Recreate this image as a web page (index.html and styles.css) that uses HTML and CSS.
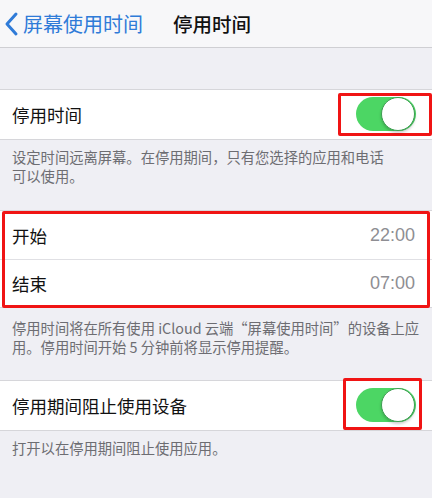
FILE: index.html
```html
<!DOCTYPE html>
<html lang="zh-CN">
<head>
    <meta charset="UTF-8">
    <meta name="viewport" content="width=device-width, initial-scale=1.0">
    <title>停用时间</title>
    <link rel="stylesheet" href="styles.css">
</head>
<body>
    <div class="screen">
        <header class="navbar">
            <a class="back" href="#">
                <svg class="chevron" width="16" height="26" viewBox="0 0 16 26">
                    <polyline points="12,3 3,13 12,23" fill="none" stroke="#2f7bd8" stroke-width="3" stroke-linecap="round" stroke-linejoin="round"/>
                </svg>
                <span>屏幕使用时间</span>
            </a>
            <h1>停用时间</h1>
        </header>

        <section class="group first">
            <div class="row">
                <span class="label">停用时间</span>
                <span class="mark mark-top">
                    <span class="switch on"><span class="knob"></span></span>
                </span>
            </div>
        </section>
        <p class="note note-first">设定时间远离屏幕。在停用期间，只有您选择的应用和电话<br>可以使用。</p>

        <section class="group times">
            <div class="row">
                <span class="label">开始</span>
                <span class="value">22:00</span>
            </div>
            <div class="row">
                <span class="label">结束</span>
                <span class="value">07:00</span>
            </div>
            <span class="mark-box"></span>
        </section>
        <p class="note note-times">停用时间将在所有使用 iCloud 云端“屏幕使用时间”的设备上应<br>用。停用时间开始 5 分钟前将显示停用提醒。</p>

        <section class="group">
            <div class="row">
                <span class="label">停用期间阻止使用设备</span>
                <span class="mark mark-bottom">
                    <span class="switch on"><span class="knob"></span></span>
                </span>
            </div>
        </section>
        <p class="note">打开以在停用期间阻止使用应用。</p>
    </div>
</body>
</html>
```

FILE: styles.css
```css
body {
    margin: 0;
    background-color: #fff;
    font-family: "Noto Sans CJK SC", "Noto Sans", sans-serif;
    color: #111;
}

.screen {
    width: 432px;
    height: 498px;
    background-color: #efeff4;
    overflow: hidden;
}

.navbar {
    height: 47px;
    background-color: #f7f7f9;
    border-bottom: 1px solid #cfcfd3;
    display: flex;
    align-items: center;
    padding-left: 4px;
}

.back {
    display: flex;
    align-items: center;
    gap: 3px;
    color: #2f7bd8;
    text-decoration: none;
    font-size: 20px;
}

.navbar h1 {
    margin: 0 0 0 30px;
    font-size: 19.5px;
    font-weight: 500;
    color: #111;
}

.group {
    background-color: #fff;
    border-top: 1px solid #d6d6da;
    border-bottom: 1px solid #d6d6da;
    position: relative;
}

.group.first {
    margin-top: 41px;
}

.row {
    height: 49px;
    display: flex;
    align-items: center;
    justify-content: space-between;
    padding-left: 12px;
}

.times .row {
    height: 48px;
    box-sizing: border-box;
    padding-right: 17px;
}

.times .row + .row {
    border-top: 1px solid #e0e0e4;
}

.label {
    font-size: 17.5px;
}

.value {
    font-size: 18px;
    color: #8e8e93;
    font-family: "Liberation Sans", "Noto Sans", sans-serif;
}

.note {
    margin: 0;
    padding: 7px 12px 0;
    font-size: 14.3px;
    line-height: 19px;
    color: #6d6d72;
}

.note-first {
    height: 38px;
    margin-bottom: 25px;
}

.note-times {
    padding-top: 10px;
    height: 38px;
    margin-bottom: 24px;
}

/* switch */
.switch {
    display: block;
    width: 60px;
    height: 34px;
    border-radius: 17px;
    background-color: #4cd664;
    position: relative;
}

.knob {
    position: absolute;
    top: 0;
    right: 1px;
    width: 32px;
    height: 32px;
    border-radius: 50%;
    background-color: #fff;
    border: 1px solid #3c9e50;
    box-shadow: 0 2px 3px rgba(0, 0, 0, 0.2);
}

/* red annotation boxes */
.mark {
    border: 3px solid #f01414;
    border-radius: 2px;
}

.mark-top {
    padding: 1px 13px 2px 15px;
}

.mark-bottom {
    padding: 7px 3px 5px 10px;
    margin-right: 10px;
    margin-bottom: 3px;
}

.mark-box {
    position: absolute;
    left: 2px;
    right: 2px;
    top: 0;
    bottom: -1px;
    border: 3px solid #f01414;
    border-radius: 2px;
}
```
